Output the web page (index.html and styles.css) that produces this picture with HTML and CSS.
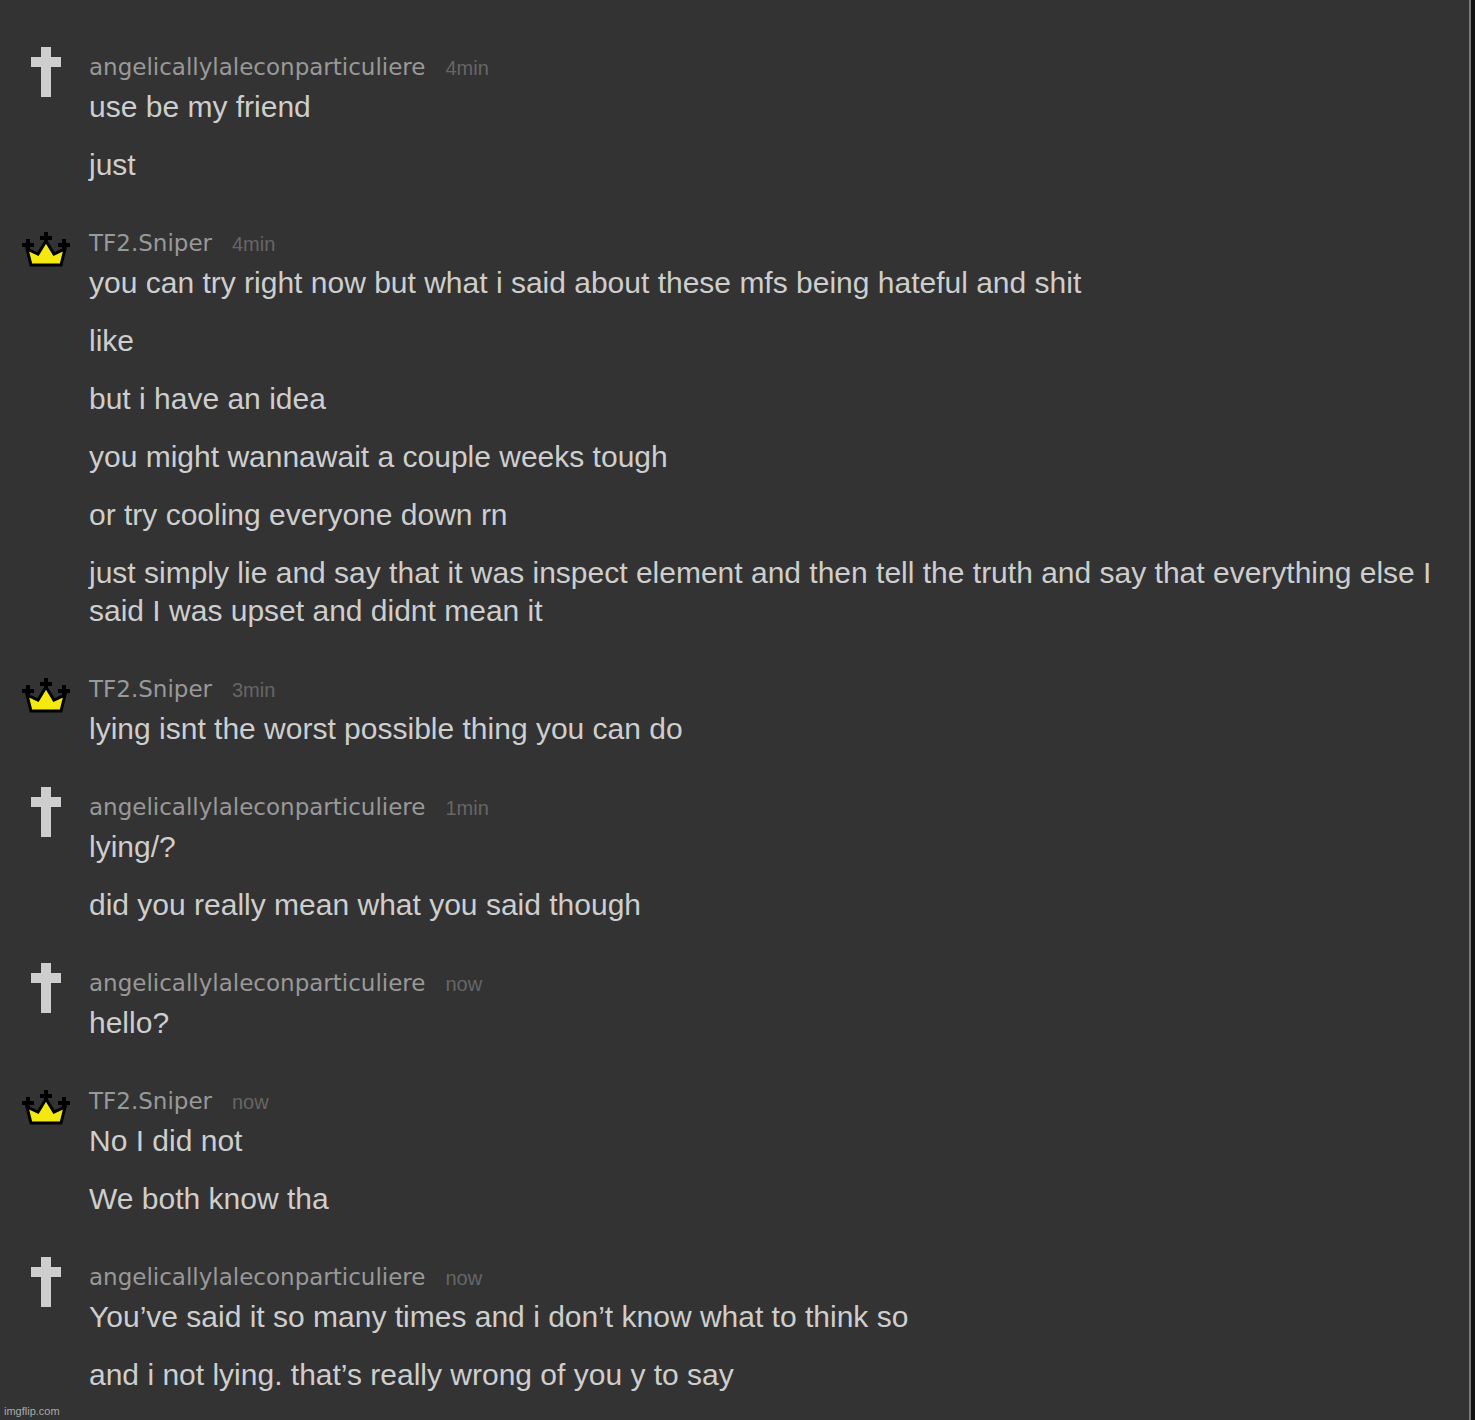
FILE: index.html
```html
<!DOCTYPE html>
<html lang="en">
<head>
<meta charset="utf-8">
<title>Memechat</title>
<link rel="stylesheet" href="styles.css">
</head>
<body>

<!-- avatars -->
<svg class="icons" width="0" height="0">
    <symbol id="cross" viewBox="0 0 50 50">
        <path fill="#cecece" d="M20 0H30V10H40V20H30V50H20V20H10V10H20Z"/>
    </symbol>
    <symbol id="crown" viewBox="0 0 50 50">
        <path fill="#000" d="M23 9H27V13H31V17H27V21H23V17H19V13H23ZM5 16H9V20H13V24H9V29H5V24H1V20H5ZM41 16H45V20H49V24H45V29H41V24H37V20H41Z"/>
        <path fill="#f5e811" stroke="#000" stroke-width="3" d="M6 26L17 31L25 18L33 31L44 26L40 42H10Z"/>
    </symbol>
</svg>

<main class="chat">
    <section class="group">
        <svg class="avatar"><use href="#cross"/></svg>
        <div class="content">
            <div class="header"><span class="name">angelicallylaleconparticuliere</span><span class="time">4min</span></div>
            <p class="message">use be my friend</p>
            <p class="message">just</p>
        </div>
    </section>

    <section class="group">
        <svg class="avatar"><use href="#crown"/></svg>
        <div class="content">
            <div class="header"><span class="name">TF2.Sniper</span><span class="time">4min</span></div>
            <p class="message">you can try right now but what i said about these mfs being hateful and shit</p>
            <p class="message">like</p>
            <p class="message">but i have an idea</p>
            <p class="message">you might wannawait a couple weeks tough</p>
            <p class="message">or try cooling everyone down rn</p>
            <p class="message">just simply lie and say that it was inspect element and then tell the truth and say that everything else I said I was upset and didnt mean it</p>
        </div>
    </section>

    <section class="group">
        <svg class="avatar"><use href="#crown"/></svg>
        <div class="content">
            <div class="header"><span class="name">TF2.Sniper</span><span class="time">3min</span></div>
            <p class="message">lying isnt the worst possible thing you can do</p>
        </div>
    </section>

    <section class="group">
        <svg class="avatar"><use href="#cross"/></svg>
        <div class="content">
            <div class="header"><span class="name">angelicallylaleconparticuliere</span><span class="time">1min</span></div>
            <p class="message">lying/?</p>
            <p class="message">did you really mean what you said though</p>
        </div>
    </section>

    <section class="group">
        <svg class="avatar"><use href="#cross"/></svg>
        <div class="content">
            <div class="header"><span class="name">angelicallylaleconparticuliere</span><span class="time">now</span></div>
            <p class="message">hello?</p>
        </div>
    </section>

    <section class="group">
        <svg class="avatar"><use href="#crown"/></svg>
        <div class="content">
            <div class="header"><span class="name">TF2.Sniper</span><span class="time">now</span></div>
            <p class="message">No I did not</p>
            <p class="message">We both know tha</p>
        </div>
    </section>

    <section class="group">
        <svg class="avatar"><use href="#cross"/></svg>
        <div class="content">
            <div class="header"><span class="name">angelicallylaleconparticuliere</span><span class="time">now</span></div>
            <p class="message">You’ve said it so many times and i don’t know what to think so</p>
            <p class="message">and i not lying. that’s really wrong of you y to say</p>
        </div>
    </section>
</main>

<div class="watermark">imgflip.com</div>

</body>
</html>
```
FILE: styles.css
```css
* {
    box-sizing: border-box;
}

body {
    margin: 0;
    background-color: #111;
    font-family: "Liberation Sans", Arial, sans-serif;
}

.icons {
    position: absolute;
}

.chat {
    display: flex;
    flex-direction: column;
    gap: 29px;
    min-height: 100vh;
    margin-right: 4px;
    padding: 47px 30px 16px 21px;
    background-color: #333;
    border-right: 2px solid #777;
}

.group {
    display: flex;
    gap: 18px;
}

.avatar {
    flex: none;
    width: 50px;
    height: 50px;
}

.content {
    flex: 1;
    padding-top: 9px;
}

.header {
    display: flex;
    align-items: baseline;
    gap: 20px;
    height: 22px;
    line-height: 22px;
}

.name {
    font-family: "DejaVu Sans", Verdana, sans-serif;
    font-size: 23px;
    color: #999;
}

.time {
    font-size: 20px;
    color: #666;
}

.message {
    margin: 0;
    padding: 10px 0;
    font-size: 30px;
    line-height: 38px;
    color: #cecece;
}

.watermark {
    position: absolute;
    left: 4px;
    bottom: 3px;
    font-size: 11px;
    color: #aaa;
}
```
